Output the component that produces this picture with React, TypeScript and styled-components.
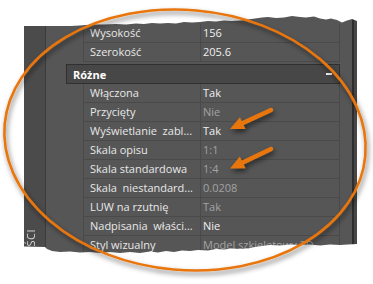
import React from "react";
import styled, { createGlobalStyle } from "styled-components";

const GlobalStyle = createGlobalStyle`
  html, body {
    margin: 0;
    padding: 0;
    background: #ffffff;
  }
  body {
    width: 373px;
    height: 284px;
    overflow: hidden;
    font-family: "Open Sans", "Noto Sans", sans-serif;
  }
`;

const Stage = styled.div`
  position: relative;
  width: 373px;
  height: 284px;
  padding: 16px 0 0 24px;
  box-sizing: border-box;
`;

const Palette = styled.div`
  display: flex;
  width: 333px;
  height: 240px;
  background: #565656;
  overflow: hidden;
`;

const TitleStrip = styled.div`
  width: 22px;
  flex-shrink: 0;
  box-sizing: border-box;
  background: #4b4b4b;
  border-right: 1px solid #3b3b3b;
  padding: 213px 0 0 1px;
  overflow: hidden;
`;

const TitleText = styled.div`
  writing-mode: vertical-rl;
  transform: rotate(180deg);
  font-size: 11px;
  line-height: 12px;
  letter-spacing: 0.5px;
  color: #d6d6d6;
  white-space: nowrap;
`;

const Main = styled.div`
  flex: 1;
  display: flex;
  flex-direction: column;
  padding-top: 8px;
`;

const RightEdge = styled.div`
  width: 5px;
  flex-shrink: 0;
  box-sizing: border-box;
  background: #474747;
  border-left: 2px solid #2e2e2e;
`;

const Row = styled.div`
  display: grid;
  grid-template-columns: 117px 1fr;
  margin-left: 37px;
  width: 257px;
  height: 19px;
  box-sizing: border-box;
  border-left: 1px solid #4a4a4a;
  border-right: 1px solid #4a4a4a;
  border-bottom: 1px solid #4a4a4a;
  font-size: 11px;
  line-height: 18px;
`;

const Label = styled.div`
  padding-left: 6px;
  border-right: 1px solid #4a4a4a;
  color: #e8e8e8;
  white-space: pre;
  overflow: hidden;
`;

const Value = styled.div<{ $dim?: boolean }>`
  padding-left: 2px;
  color: ${(p) => (p.$dim ? "#a3a3a3" : "#f0f0f0")};
  white-space: nowrap;
  overflow: hidden;
`;

const Section = styled.div`
  display: flex;
  align-items: center;
  justify-content: space-between;
  margin: 2px 0 0 20px;
  width: 274px;
  height: 20px;
  box-sizing: border-box;
  padding: 0 7px 0 6px;
  background: #474747;
  border: 1px solid #303030;
  color: #ffffff;
  font-size: 11px;
  font-weight: 700;
`;

const Collapse = styled.span`
  width: 6px;
  height: 2px;
  background: #f0f0f0;
`;

const Overlay = styled.svg`
  position: absolute;
  left: 0;
  top: 0;
  width: 373px;
  height: 284px;
  pointer-events: none;
`;

type Prop = { label: string; value: string; dim?: boolean };

const before: Prop[] = [
  { label: "Wysokość", value: "156" },
  { label: "Szerokość", value: "205.6" },
];

const misc: Prop[] = [
  { label: "Włączona", value: "Tak" },
  { label: "Przycięty", value: "Nie", dim: true },
  { label: "Wyświetlanie  zabl...", value: "Tak" },
  { label: "Skala opisu", value: "1:1", dim: true },
  { label: "Skala standardowa", value: "1:4", dim: true },
  { label: "Skala  niestandard...", value: "0.0208", dim: true },
  { label: "LUW na rzutnię", value: "Tak", dim: true },
  { label: "Nadpisania  właści...", value: "Nie" },
  { label: "Styl wizualny", value: "Model szkieletowy 2D", dim: true },
];

// torn paper edges laid over the palette
const topTear =
  "0,0 373,0 373,23 357,21 352,19 347,20.5 342,22.5 337,20 331,18.5 326,19.5 320,18.5 314,16.5 306,17.5 300,17 292,16 284,17.5 276,18 268,17 262,17.5 255,18.5 248,19.5 240,20.5 232,21 224,20.5 216,21.5 208,21 200,22 192,22.5 184,22 176,23.5 168,23 160,23.5 152,23 144,24 136,23.5 126,24.5 116,24 104,24.5 92,24.5 80,25.5 70,26 0,26";

const bottomTear =
  "0,284 373,284 373,244 357,244 348,244.5 340,245 330,244.5 320,245.5 310,244.5 300,245 290,244.5 280,245.5 270,245 262,246 255,247 248,248.5 240,249 232,248.5 224,249.5 216,249 208,250.5 198,250 190,251 182,250.5 174,252 166,251 158,252.5 150,251.5 140,253 130,252 120,253 110,252 100,253 90,252 80,252.5 70,251.5 60,252 52,251 47,249 45,247 24,246.5 0,246.5";

function arrow(tx: number, ty: number, sx: number, sy: number) {
  const dx = sx - tx;
  const dy = sy - ty;
  const len = Math.hypot(dx, dy);
  const ux = dx / len;
  const uy = dy / len;
  const nx = -uy;
  const ny = ux;
  const head = 14;
  const half = 6.5;
  const bx = tx + ux * head;
  const by = ty + uy * head;
  return {
    head: `${tx},${ty} ${bx + nx * half},${by + ny * half} ${bx - nx * half},${by - ny * half}`,
    shaft: { x1: bx - ux * 1, y1: by - uy * 1, x2: sx, y2: sy },
  };
}

const arrows = [arrow(230, 129, 271, 110), arrow(230, 168.5, 271, 149)];

export default function App() {
  return (
    <>
      <GlobalStyle />
      <Stage>
        <Palette>
          <TitleStrip>
            <TitleText>WŁAŚCIWOŚCI</TitleText>
          </TitleStrip>
          <Main>
            {before.map((p) => (
              <Row key={p.label}>
                <Label>{p.label}</Label>
                <Value $dim={p.dim}>{p.value}</Value>
              </Row>
            ))}
            <Section>
              <span>Różne</span>
              <Collapse />
            </Section>
            {misc.map((p) => (
              <Row key={p.label}>
                <Label>{p.label}</Label>
                <Value $dim={p.dim}>{p.value}</Value>
              </Row>
            ))}
          </Main>
          <RightEdge />
        </Palette>
        <Overlay viewBox="0 0 373 284">
          <defs>
            <filter id="shadow" x="-20%" y="-20%" width="140%" height="140%">
              <feDropShadow dx="1.5" dy="3" stdDeviation="2.4" floodColor="#000" floodOpacity="0.55" />
            </filter>
          </defs>
          <polygon points={topTear} fill="#ffffff" />
          <polygon points={bottomTear} fill="#ffffff" />
          <g filter="url(#shadow)">
            <ellipse
              cx="185"
              cy="140"
              rx="181"
              ry="130"
              transform="rotate(5 185 140)"
              fill="none"
              stroke="#e8760f"
              strokeWidth="2.6"
            />
            {arrows.map((a, i) => (
              <g key={i}>
                <line {...a.shaft} stroke="#e8760f" strokeWidth="4.4" strokeLinecap="round" />
                <polygon points={a.head} fill="#e8760f" />
              </g>
            ))}
          </g>
        </Overlay>
      </Stage>
    </>
  );
}
